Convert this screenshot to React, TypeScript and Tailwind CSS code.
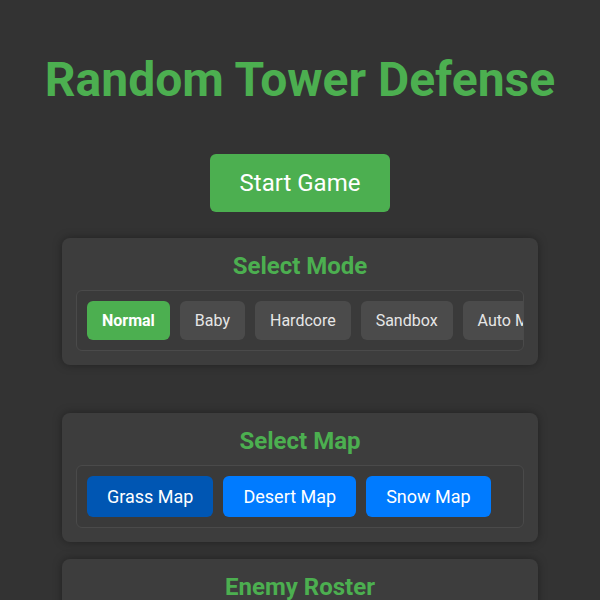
import React, { useState } from "react";

const MODES = ["Normal", "Baby", "Hardcore", "Sandbox", "Auto Mode", "Endless"];
const MAPS = ["Grass Map", "Desert Map", "Snow Map"];

function Panel({ title, children }: { title: string; children?: React.ReactNode }) {
  return (
    <section className="w-[476px] rounded-lg bg-[#3d3d3d] px-[14px] pt-[15px] pb-[14px] shadow-[0_0_10px_rgba(0,0,0,0.35)]">
      <h2 className="mb-[11px] text-center text-[24px] leading-[26px] font-bold text-[#4CAF50]">{title}</h2>
      {children}
    </section>
  );
}

export default function App() {
  const [mode, setMode] = useState("Normal");
  const [map, setMap] = useState("Grass Map");

  return (
    <div
      className="flex min-h-screen flex-col items-center bg-[#333333] pt-[51px] pb-10 text-white"
      style={{ fontFamily: "Roboto, 'Noto Sans', sans-serif" }}
    >
      <h1 className="text-[48px] leading-[58px] font-bold text-[#4CAF50]">Random Tower Defense</h1>

      <button className="mt-[45px] h-[58px] w-[180px] rounded-md bg-[#4CAF50] text-[24px] text-white">
        Start Game
      </button>

      <div className="mt-[26px]">
        <Panel title="Select Mode">
          <div className="flex gap-[10px] overflow-hidden rounded-md border border-[#4a4a4a] bg-[#3a3a3a] p-[10px]">
            {MODES.map((m) => (
              <button
                key={m}
                onClick={() => setMode(m)}
                className={
                  m === mode
                    ? "shrink-0 rounded-md bg-[#4CAF50] px-[15px] py-[10px] text-[16px] leading-[19px] font-bold whitespace-nowrap text-white"
                    : "shrink-0 rounded-md bg-[#4b4b4b] px-[15px] py-[10px] text-[16px] leading-[19px] whitespace-nowrap text-[#e6e6e6]"
                }
              >
                {m}
              </button>
            ))}
          </div>
        </Panel>
      </div>

      <div className="mt-[48px]">
        <Panel title="Select Map">
          <div className="flex gap-[10px] rounded-md border border-[#4a4a4a] bg-[#3a3a3a] p-[10px]">
            {MAPS.map((m) => (
              <button
                key={m}
                onClick={() => setMap(m)}
                className={
                  m === map
                    ? "rounded-md bg-[#0056b3] px-5 py-[10px] text-[18px] leading-[21px] whitespace-nowrap text-white"
                    : "rounded-md bg-[#007BFF] px-5 py-[10px] text-[18px] leading-[21px] whitespace-nowrap text-white"
                }
              >
                {m}
              </button>
            ))}
          </div>
        </Panel>
      </div>

      <div className="mt-[17px]">
        <Panel title="Enemy Roster">
          <div className="h-[120px] rounded-md border border-[#4a4a4a] bg-[#3a3a3a]" />
        </Panel>
      </div>
    </div>
  );
}
